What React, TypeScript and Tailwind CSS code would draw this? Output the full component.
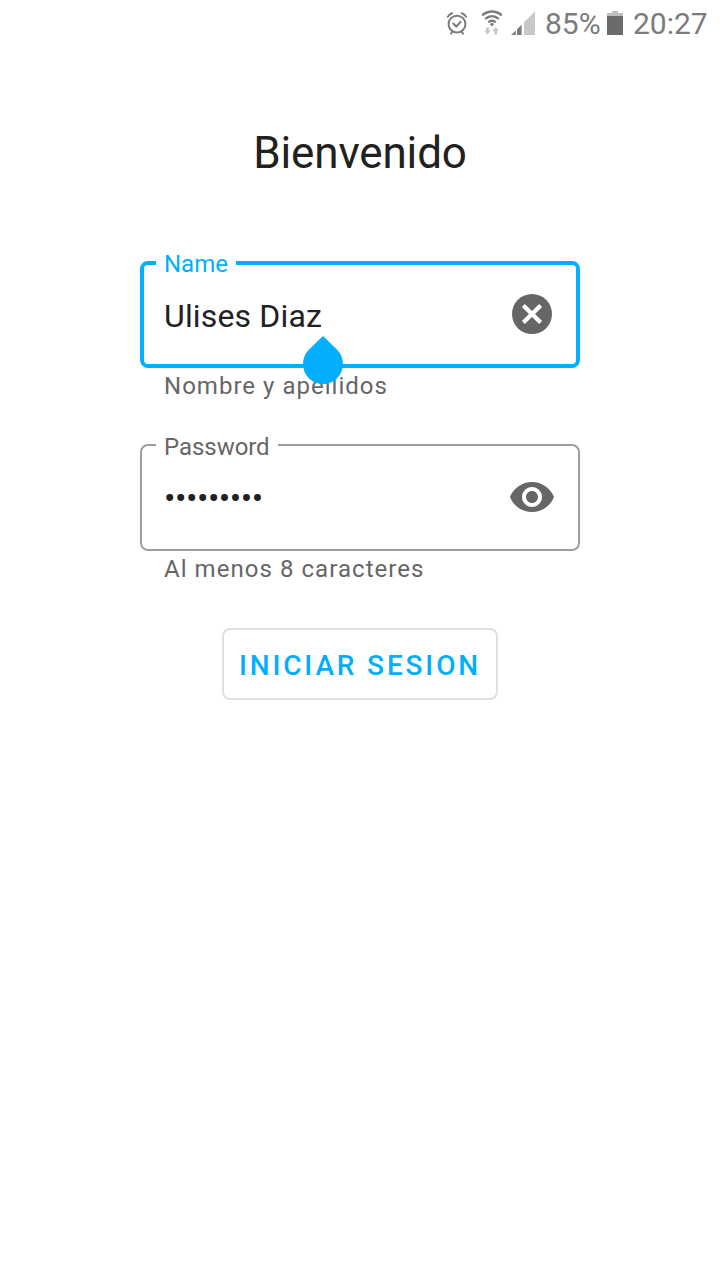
import React from 'react';

function AlarmIcon() {
  return (
    <svg className="h-[24px] w-[22px]" viewBox="0 0 24 26" fill="none" stroke="#7b7b7b" strokeWidth="2.2" strokeLinecap="round">
      <circle cx="12" cy="14.2" r="9.2" />
      <path d="M2 6.2A12 12 0 0 1 6.6 2.4M22 6.2A12 12 0 0 0 17.4 2.4M6.8 22.2L5.5 24.6M17.2 22.2L18.5 24.6" />
      <path d="M8 13.6L11.2 16.8L16 11.6" />
    </svg>
  );
}

function WifiIcon() {
  return (
    <svg className="h-[25px] w-[22px]" viewBox="0 0 22 25" fill="none">
      <g stroke="#7b7b7b" strokeWidth="2.3">
        <path d="M1.2 5.4C7 .2 15 .2 20.8 5.4" />
        <path d="M4.2 9C8.4 5.3 13.6 5.3 17.8 9" />
        <path d="M7.3 12.3C9.6 10.3 12.4 10.3 14.7 12.3" />
      </g>
      <path d="M11 12.8L13.2 14L11 16.4L8.8 14Z" fill="#7b7b7b" />
      <path d="M5.2 17.4H7.8V20.6H9.6L6.5 24.4L3.4 20.6H5.2ZM13.4 24.4V21H11.5L14.7 17.2L17.9 21H16V24.4Z" fill="#c4c4c4" />
    </svg>
  );
}

function SignalIcon() {
  return (
    <svg className="h-[24px] w-[25px]" viewBox="0 0 25 24">
      <path d="M0 24L4.8 19.4V24ZM6 18.2L10.6 13.8V24H6Z" fill="#7b7b7b" />
      <path d="M13 11.2L24 .6V24H13Z" fill="#c8c8c8" />
    </svg>
  );
}

function BatteryIcon() {
  return (
    <svg className="h-[24px] w-[16px]" viewBox="0 0 16 24">
      <path d="M0 2H5V0H11V2H16V5H0Z" fill="#bdbdbd" />
      <path d="M0 5H16V24H0Z" fill="#6b6b6b" />
    </svg>
  );
}

function StatusBar() {
  return (
    <header className="flex h-12 items-start justify-end pr-[11px] text-[30px] leading-[48px] text-[#7b7b7b]">
      <div className="mt-[11px]"><AlarmIcon /></div>
      <div className="ml-[13px] mt-[10px]"><WifiIcon /></div>
      <div className="ml-[8px] mt-[11px]"><SignalIcon /></div>
      <span className="ml-[9px] w-[56px]">85%</span>
      <div className="ml-[6px] mt-[11px]"><BatteryIcon /></div>
      <span className="ml-[10px] w-[76px]">20:27</span>
    </header>
  );
}

export default function App() {
  return (
    <div className="flex min-h-screen w-full flex-col bg-white font-['Roboto',sans-serif] text-[#212121]">
      <StatusBar />
      <main className="flex flex-col items-center">
        <h1 className="mt-[79px] text-[44px] leading-[52px] tracking-[-0.15px]">Bienvenido</h1>

        <form className="mt-[70px] flex w-[440px] flex-col items-stretch">
          <fieldset className="h-[119px] w-full rounded-lg border-4 border-[#03aeff] pl-3 pr-6">
            <legend className="px-2 pt-[2px] text-[24px] leading-[26px] text-[#03aeff]">Name</legend>
            <div className="mt-[17px] flex h-10 items-center justify-between pl-2">
              <div className="relative mt-1 text-[32px] leading-[40px] tracking-[0.15px]">
                Ulises Diaz
                <svg className="absolute -right-[22px] top-[40px] h-[50px] w-[42px]" viewBox="0 0 42 50" fill="#03aeff">
                  <path d="M21 0L35.14 13.86A20 20 0 1 1 6.86 13.86Z" />
                </svg>
              </div>
              <svg className="size-10" viewBox="2 2 20 20" fill="#666">
                <path d="M12 2a10 10 0 1 0 0 20 10 10 0 0 0 0-20z" />
                <path d="M7.7 7.7L16.3 16.3M16.3 7.7L7.7 16.3" stroke="#fff" strokeWidth="2.1" />
              </svg>
            </div>
          </fieldset>
          <p className="mt-1 pl-6 text-[24px] leading-[28px] tracking-[1.02px] text-[#666]">Nombre y apellidos</p>

          <fieldset className="mt-[31px] h-[120px] w-full rounded-lg border-2 border-[#9e9e9e] pl-[14px] pr-[22px]">
            <legend className="px-2 pt-[4px] text-[24px] leading-[24px] tracking-[-0.05px] text-[#666]">Password</legend>
            <div className="mt-[18px] flex h-10 items-center justify-between pl-2">
              <span className="mt-[2px] text-[34px] leading-[40px] tracking-[-0.5px]">•••••••••</span>
              <svg className="h-[40px] w-[48px]" viewBox="0 2 24 20" fill="#666">
                <path d="M12 4.5C7 4.5 2.73 7.61 1 12c1.73 4.39 6 7.5 11 7.5s9.27-3.11 11-7.5c-1.73-4.39-6-7.5-11-7.5zM12 17c-2.76 0-5-2.24-5-5s2.24-5 5-5 5 2.24 5 5-2.24 5-5 5zm0-8c-1.66 0-3 1.34-3 3s1.34 3 3 3 3-1.34 3-3-1.34-3-3-3z" />
              </svg>
            </div>
          </fieldset>
          <p className="mt-1 pl-6 text-[24px] leading-[28px] tracking-[1.05px] text-[#666]">Al menos 8 caracteres</p>

          <button type="button" className="mt-[45px] h-[72px] w-[276px] self-center rounded-lg border-2 border-[#e0e0e0] pt-1 text-[28px] font-medium tracking-[2.85px] text-[#03aeff]">
            INICIAR SESION
          </button>
        </form>
      </main>
    </div>
  );
}
